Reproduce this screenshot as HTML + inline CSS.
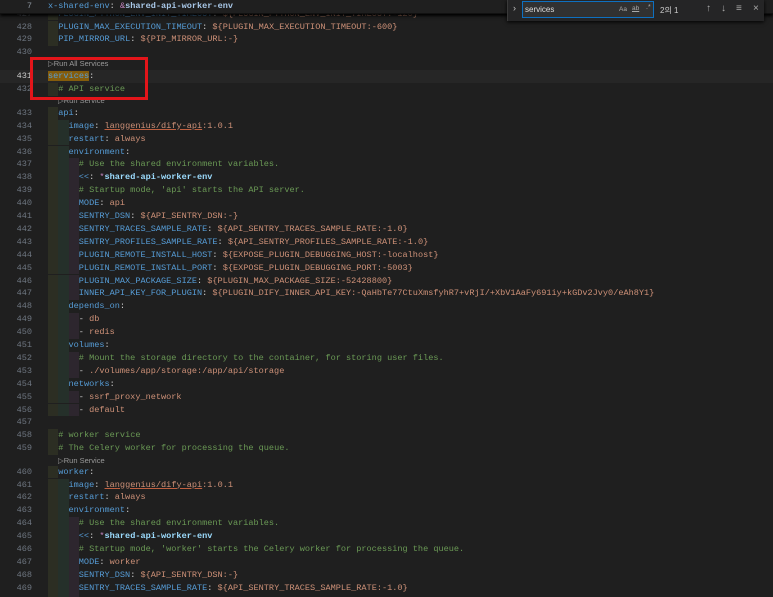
<!DOCTYPE html>
<html><head><meta charset="utf-8"><style>
html,body{margin:0;padding:0;background:#1f1f1f;width:773px;height:597px;overflow:hidden;position:relative;font-family:"Liberation Mono",monospace;}
.r{position:absolute;left:0;width:773px;height:12.9px;line-height:12.9px;font-size:8.57px;white-space:pre;}
.n{position:absolute;left:0;width:32px;text-align:right;color:#6e7681;}
.c{position:absolute;left:48px;color:#d4d4d4;}
.k{color:#569cd6}.s{color:#ce9178}.g{color:#6a9955}.p{color:#c586c0}.a{color:#9cdcfe;font-weight:bold}
.i1,.i2,.i3{display:inline-block;width:10.28px;height:12.9px;vertical-align:top}
.i1{background:#2c2e23}.i2{background:#25302a}.i3{background:#2d262e}
.u{text-decoration:underline;text-decoration-color:#c06040}
.lens{position:absolute;font-family:"Liberation Sans",sans-serif;font-size:7.5px;color:#9a9a9a;height:10.5px;line-height:10.5px}
</style></head><body>

<div class="r" style="top:7.6px"><span class="n">427</span><span class="c"><span class="i1"></span><span class="k">PLUGIN_PYTHON_ENV_INIT_TIMEOUT</span>: <span class="s">${PLUGIN_PYTHON_ENV_INIT_TIMEOUT:-120}</span></span></div>
<div class="r" style="top:20.5px"><span class="n">428</span><span class="c"><span class="i1"></span><span class="k">PLUGIN_MAX_EXECUTION_TIMEOUT</span>: <span class="s">${PLUGIN_MAX_EXECUTION_TIMEOUT:-600}</span></span></div>
<div class="r" style="top:33.4px"><span class="n">429</span><span class="c"><span class="i1"></span><span class="k">PIP_MIRROR_URL</span>: <span class="s">${PIP_MIRROR_URL:-}</span></span></div>
<div class="r" style="top:46.3px"><span class="n">430</span></div>
<div class="lens" style="left:48px;top:59px">▷Run All Services</div>
<div class="r" style="top:69.8px;background:#262626"><span class="n" style="color:#cccccc">431</span><span class="c"><span class="k" style="background:#845c0c">services</span>:</span></div>
<div class="r" style="top:82.7px"><span class="n">432</span><span class="c"><span class="i1"></span><span class="g"># API service</span></span></div>
<div class="lens" style="left:58px;top:95.6px">▷Run Service</div>
<div id="b"></div>
<script>
var L=[
[433,'<span class="i1"></span><span class="k">api</span>:'],
[434,'<span class="i1"></span><span class="i2"></span><span class="k">image</span>: <span class="s"><span class="u">langgenius/dify-api</span>:1.0.1</span>'],
[435,'<span class="i1"></span><span class="i2"></span><span class="k">restart</span>: <span class="s">always</span>'],
[436,'<span class="i1"></span><span class="i2"></span><span class="k">environment</span>:'],
[437,'3<span class="g"># Use the shared environment variables.</span>'],
[438,'3<span class="k">&lt;&lt;</span>: <span class="p">*</span><span class="a">shared-api-worker-env</span>'],
[439,"3<span class=\"g\"># Startup mode, 'api' starts the API server.</span>"],
[440,'3<span class="k">MODE</span>: <span class="s">api</span>'],
[441,'3<span class="k">SENTRY_DSN</span>: <span class="s">${API_SENTRY_DSN:-}</span>'],
[442,'3<span class="k">SENTRY_TRACES_SAMPLE_RATE</span>: <span class="s">${API_SENTRY_TRACES_SAMPLE_RATE:-1.0}</span>'],
[443,'3<span class="k">SENTRY_PROFILES_SAMPLE_RATE</span>: <span class="s">${API_SENTRY_PROFILES_SAMPLE_RATE:-1.0}</span>'],
[444,'3<span class="k">PLUGIN_REMOTE_INSTALL_HOST</span>: <span class="s">${EXPOSE_PLUGIN_DEBUGGING_HOST:-localhost}</span>'],
[445,'3<span class="k">PLUGIN_REMOTE_INSTALL_PORT</span>: <span class="s">${EXPOSE_PLUGIN_DEBUGGING_PORT:-5003}</span>'],
[446,'3<span class="k">PLUGIN_MAX_PACKAGE_SIZE</span>: <span class="s">${PLUGIN_MAX_PACKAGE_SIZE:-52428800}</span>'],
[447,'3<span class="k">INNER_API_KEY_FOR_PLUGIN</span>: <span class="s">${PLUGIN_DIFY_INNER_API_KEY:-QaHbTe77CtuXmsfyhR7+vRjI/+XbV1AaFy691iy+kGDv2Jvy0/eAh8Y1}</span>'],
[448,'<span class="i1"></span><span class="i2"></span><span class="k">depends_on</span>:'],
[449,'3- <span class="s">db</span>'],
[450,'3- <span class="s">redis</span>'],
[451,'<span class="i1"></span><span class="i2"></span><span class="k">volumes</span>:'],
[452,'3<span class="g"># Mount the storage directory to the container, for storing user files.</span>'],
[453,'3- <span class="s">./volumes/app/storage:/app/api/storage</span>'],
[454,'<span class="i1"></span><span class="i2"></span><span class="k">networks</span>:'],
[455,'3- <span class="s">ssrf_proxy_network</span>'],
[456,'3- <span class="s">default</span>'],
[457,''],
[458,'<span class="i1"></span><span class="g"># worker service</span>'],
[459,'<span class="i1"></span><span class="g"># The Celery worker for processing the queue.</span>'],
['lens'],
[460,'<span class="i1"></span><span class="k">worker</span>:'],
[461,'<span class="i1"></span><span class="i2"></span><span class="k">image</span>: <span class="s"><span class="u">langgenius/dify-api</span>:1.0.1</span>'],
[462,'<span class="i1"></span><span class="i2"></span><span class="k">restart</span>: <span class="s">always</span>'],
[463,'<span class="i1"></span><span class="i2"></span><span class="k">environment</span>:'],
[464,'3<span class="g"># Use the shared environment variables.</span>'],
[465,'3<span class="k">&lt;&lt;</span>: <span class="p">*</span><span class="a">shared-api-worker-env</span>'],
[466,"3<span class=\"g\"># Startup mode, 'worker' starts the Celery worker for processing the queue.</span>"],
[467,'3<span class="k">MODE</span>: <span class="s">worker</span>'],
[468,'3<span class="k">SENTRY_DSN</span>: <span class="s">${API_SENTRY_DSN:-}</span>'],
[469,'3<span class="k">SENTRY_TRACES_SAMPLE_RATE</span>: <span class="s">${API_SENTRY_TRACES_SAMPLE_RATE:-1.0}</span>'],
[470,'3<span class="k">SENTRY_PROFILES_SAMPLE_RATE</span>: <span class="s">${API_SENTRY_PROFILES_SAMPLE_RATE:-1.0}</span>']
];
var h='',y=106.8;
L.forEach(function(l){
 if(l[0]=='lens'){h+='<div class="lens" style="left:58px;top:'+(y+0.5)+'px">▷Run Service</div>';y+=10.5;return;}
 var t=l[1];if(t.charAt(0)=='3')t='<span class="i1"></span><span class="i2"></span><span class="i3"></span>'+t.slice(1);
 h+='<div class="r" style="top:'+y+'px"><span class="n">'+l[0]+'</span><span class="c">'+t+'</span></div>';y+=12.9;
});
document.getElementById('b').innerHTML=h;
</script>

<div style="position:absolute;left:0;top:0;width:773px;height:13px;background:#1f1f1f;box-shadow:0 2px 3px #000;border-bottom:1px solid #111"></div>
<div class="r" style="top:0px"><span class="n" style="color:#8b949e">7</span><span class="c"><span class="k">x-shared-env</span>: <span class="p">&amp;</span><span class="a" style="color:#a9c8e8">shared-api-worker-env</span></span></div>

<div style="position:absolute;left:30px;top:57px;width:112px;height:37px;border:3px solid #e3151a"></div>

<div style="position:absolute;left:507px;top:0;width:256px;height:21px;background:#252526;box-shadow:0 1px 4px #000;border-left:1px solid #3a3a3a;font-family:'Liberation Sans','Noto Sans CJK KR',sans-serif;color:#c5c5c5">
 <div style="position:absolute;left:5px;top:3px;font-size:9px">›</div>
 <div style="position:absolute;left:14px;top:1px;width:132px;height:17px;border:1px solid #0e70c0;background:#313131;box-sizing:border-box"></div>
 <div style="position:absolute;left:17px;top:5px;font-size:8px;color:#ddd">services</div>
 <div style="position:absolute;left:111px;top:6px;font-size:6.5px;color:#aaa">Aa</div>
 <div style="position:absolute;left:124px;top:5px;font-size:6.5px;color:#aaa;text-decoration:underline">ab</div>
 <div style="position:absolute;left:138px;top:4px;font-size:7px;color:#aaa">.*</div>
 <div style="position:absolute;left:152px;top:5px;font-size:8px;color:#ccc">2의 1</div>
 <div style="position:absolute;left:198px;top:3px;font-size:10px;color:#aaa">↑</div>
 <div style="position:absolute;left:213px;top:3px;font-size:10px;color:#aaa">↓</div>
 <div style="position:absolute;left:228px;top:3px;font-size:10px;color:#aaa">≡</div>
 <div style="position:absolute;left:245px;top:3px;font-size:10px;color:#aaa">×</div>
</div>
</body></html>
